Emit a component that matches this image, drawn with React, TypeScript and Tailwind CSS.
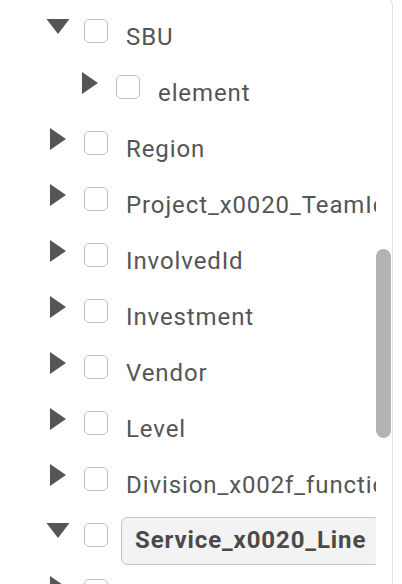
import React from "react";

type Row = {
  label: string;
  depth: number;
  open: boolean;
  selected?: boolean;
};

const rows: Row[] = [
  { label: "SBU", depth: 0, open: true },
  { label: "element", depth: 1, open: false },
  { label: "Region", depth: 0, open: false },
  { label: "Project_x0020_TeamId", depth: 0, open: false },
  { label: "InvolvedId", depth: 0, open: false },
  { label: "Investment", depth: 0, open: false },
  { label: "Vendor", depth: 0, open: false },
  { label: "Level", depth: 0, open: false },
  { label: "Division_x002f_function", depth: 0, open: false },
  { label: "Service_x0020_Line", depth: 0, open: true, selected: true },
  { label: "", depth: 0, open: false },
];

function Caret({ open }: { open: boolean }) {
  if (open) {
    return (
      <svg width="24" height="16" viewBox="0 0 24 16" className="shrink-0">
        <polygon points="0.5,0 23.5,0 12,15" fill="#555555" />
      </svg>
    );
  }
  return (
    <svg width="24" height="22" viewBox="0 0 24 22" className="shrink-0 -mt-[3px]">
      <polygon points="4,0 20,11 4,22" fill="#555555" />
    </svg>
  );
}

function TreeRow({ row }: { row: Row }) {
  return (
    <div
      className="flex items-start h-[56px] pt-[18px] whitespace-nowrap"
      style={{ paddingLeft: 46 + row.depth * 32 }}
    >
      <Caret open={row.open} />
      <div className="ml-[14px] w-[24px] h-[24px] shrink-0 rounded-[5px] border border-[#bdbdbd] bg-white" />
      {row.selected ? (
        <div className="ml-[13px] -mt-[6px] h-[48px] px-[13px] rounded-[6px] border border-[#c4c4c4] bg-[#f3f3f3] text-[24px] leading-[45px] tracking-[0.9px] font-bold text-[#4a4a4a]">
          {row.label}
        </div>
      ) : (
        row.label && (
          <div className="ml-[18px] mt-[6px] text-[24px] leading-[24px] tracking-[0.9px] text-[#555555]">{row.label}</div>
        )
      )}
    </div>
  );
}

export default function App() {
  return (
    <div className="w-[402px] h-[584px] overflow-hidden bg-white" style={{ fontFamily: "Roboto, 'Noto Sans', sans-serif" }}>
      <div className="w-[393px] h-[600px] -mt-[4px] flex border-r border-t border-[#e2e2e2] rounded-tr-[10px] bg-white">
        <div className="w-[376px] overflow-hidden pt-[4px]">
          {rows.map((r, i) => (
            <TreeRow key={i} row={r} />
          ))}
        </div>
        <div className="w-[16px] pt-[252px]">
          <div className="w-[15px] h-[189px] rounded-full bg-[#b3b3b3]" />
        </div>
      </div>
    </div>
  );
}
